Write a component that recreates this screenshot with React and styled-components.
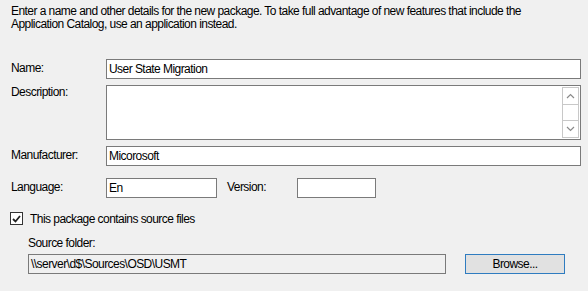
import React from 'react';
import styled, { createGlobalStyle } from 'styled-components';

const Global = createGlobalStyle`
  html, body {
    margin: 0;
    padding: 0;
    background: #f0f0f0;
  }
  body {
    font-family: "Liberation Sans", Arial, sans-serif;
    font-size: 12px;
    letter-spacing: -0.55px;
    color: #000;
  }
`;

const Page = styled.div`
  width: 588px;
  height: 291px;
  box-sizing: border-box;
  padding: 5px 7px 0 11px;
  background: #f0f0f0;
  overflow: hidden;
`;

const Intro = styled.p`
  margin: 0;
  font-size: 12px;
  line-height: 13px;
  white-space: nowrap;
`;

const Form = styled.div`
  display: grid;
  grid-template-columns: 95px 1fr;
  grid-template-rows: 20px 55px 20px auto;
  row-gap: 6px;
  margin-top: 28px;
`;

const Label = styled.label`
  display: block;
  line-height: 15px;
  padding-top: ${({ $top }) => $top ?? 2}px;
  white-space: nowrap;
`;

const Field = styled.div`
  box-sizing: border-box;
  height: ${({ $h }) => $h || 20}px;
  width: ${({ $w }) => ($w ? `${$w}px` : '100%')};
  border: 1px solid #7a7a7a;
  background: ${({ $readonly }) => ($readonly ? '#f0f0f0' : '#fff')};
  padding: 1px 2px 0;
  line-height: 16px;
  white-space: nowrap;
  position: relative;
`;

const LangRow = styled.div`
  display: flex;
  align-items: flex-start;
  grid-column: 2;
  margin-top: 6px;
`;

const LangLabel = styled(Label)`
  grid-row: 4;
  margin-top: 6px;
`;

const VersionLabel = styled(Label)`
  width: 70px;
  margin-left: 10px;
`;

const Scroll = styled.div`
  position: absolute;
  top: 1px;
  right: 1px;
  bottom: 1px;
  width: 17px;
  box-sizing: border-box;
  border: 1px solid #c8c8c8;
  background: #fff;
  display: flex;
  flex-direction: column;
  justify-content: space-between;
`;

const ScrollBtn = styled.div`
  height: 16px;
  display: flex;
  align-items: center;
  justify-content: center;
  border-${({ $up }) => ($up ? 'bottom' : 'top')}: 1px solid #c8c8c8;
`;

const CheckRow = styled.div`
  display: flex;
  align-items: center;
  margin: 13px 0 0 -1px;
  height: 15px;
`;

const Box = styled.span`
  width: 13px;
  height: 13px;
  box-sizing: border-box;
  border: 1px solid #333;
  background: #fff;
  display: flex;
  align-items: center;
  justify-content: center;
  margin-right: 7px;
`;

const Source = styled.div`
  padding-left: 17px;
  margin-top: 10px;
`;

const SourceRow = styled.div`
  display: flex;
  align-items: flex-start;
  margin-top: 3px;
`;

const Button = styled.button`
  box-sizing: border-box;
  width: 100px;
  height: 20px;
  margin-left: 19px;
  border: 1px solid #2f7cc0;
  background: #e1e1e1;
  font-family: inherit;
  font-size: 12px;
  letter-spacing: inherit;
  color: #000;
  padding: 0;
  line-height: 16px;
`;

const Arrow = ({ up }) => (
  <svg width="9" height="6" viewBox="0 0 9 6">
    <path
      d={up ? 'M1 5 L4.5 1.5 L8 5' : 'M1 1 L4.5 4.5 L8 1'}
      fill="none"
      stroke="#8a8a8a"
      strokeWidth="1.2"
    />
  </svg>
);

export default function App() {
  return (
    <Page>
      <Global />
      <Intro>
        Enter a name and other details for the new package. To take full advantage of new features that include the
        <br />
        Application Catalog, use an application instead.
      </Intro>
      <Form>
        <Label>Name:</Label>
        <Field>User State Migration</Field>
        <Label $top={0}>Description:</Label>
        <Field $h={55}>
          <Scroll>
            <ScrollBtn $up><Arrow up /></ScrollBtn>
            <ScrollBtn><Arrow /></ScrollBtn>
          </Scroll>
        </Field>
        <Label>Manufacturer:</Label>
        <Field>Micorosoft</Field>
        <LangLabel>Language:</LangLabel>
        <LangRow>
          <Field $w={111}>En</Field>
          <VersionLabel>Version:</VersionLabel>
          <Field $w={79} />
        </LangRow>
      </Form>
      <CheckRow>
        <Box>
          <svg width="9" height="8" viewBox="0 0 9 8">
            <path d="M1 4 L3.5 6.5 L8 1" fill="none" stroke="#222" strokeWidth="1.8" />
          </svg>
        </Box>
        This package contains source files
      </CheckRow>
      <Source>
        <Label $top={0}>Source folder:</Label>
        <SourceRow>
          <Field $w={418} $readonly>\\server\d$\Sources\OSD\USMT</Field>
          <Button>Browse...</Button>
        </SourceRow>
      </Source>
    </Page>
  );
}
